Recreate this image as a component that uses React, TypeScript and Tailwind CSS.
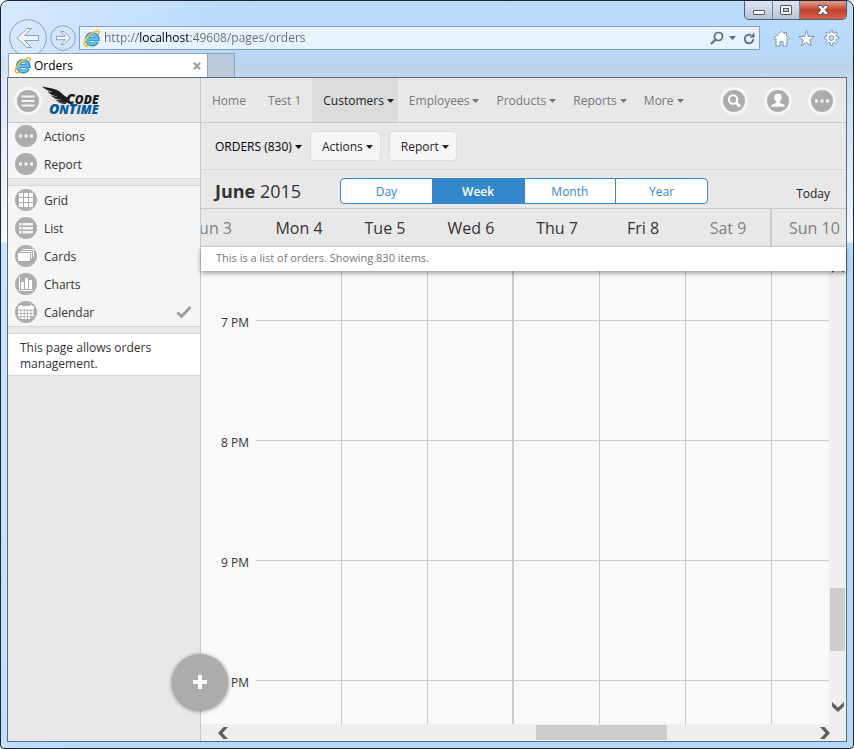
import type { ReactNode } from "react";
import clsx from "clsx";

type IconProps = { className?: string };

const mainMenu = [
  { label: "Home", menu: false },
  { label: "Test 1", menu: false },
  { label: "Customers", menu: true, active: true },
  { label: "Employees", menu: true },
  { label: "Products", menu: true },
  { label: "Reports", menu: true },
  { label: "More", menu: true },
];

const views = ["Day", "Week", "Month", "Year"];

const days = [
  { label: "Mon 4" },
  { label: "Tue 5" },
  { label: "Wed 6", divider: true },
  { label: "Thu 7" },
  { label: "Fri 8" },
  { label: "Sat 9", weekend: true },
];

const hours = ["7 PM", "8 PM", "9 PM", "10 PM"];

function Caret({ className }: IconProps) {
  return (
    <svg viewBox="0 0 7 4" className={clsx("h-1 w-[7px] shrink-0 fill-current", className)}>
      <path d="M0 0h7L3.5 4z" />
    </svg>
  );
}

function IeIcon() {
  return (
    <svg viewBox="0 0 17 17" className="size-[17px] shrink-0">
      <path d="M14 11.500a5.300 5.300 0 1 1 .5-2.500H4.500" fill="none" stroke="#2a86c8" strokeWidth="4" />
      <path d="M13.600 11.300a5 5 0 1 1 .5-2.300H4.800" fill="none" stroke="#62c3f2" strokeWidth="2.400" />
      <path
        d="M1.900 15.500C-.3 13.300 3 8 7.600 4.200 11.500 1 15.300.2 16 1.700c.3.900 0 2-.7 3.200"
        fill="none"
        stroke="#f6bd22"
        strokeWidth="1.600"
      />
      <path d="M1.900 15.500c1 .8 3.200.2 5-1" fill="none" stroke="#e9a90f" strokeWidth="1.400" />
    </svg>
  );
}

function Logo() {
  return (
    <svg viewBox="0 0 64 34" className="h-[34px] w-16 shrink-0" role="img" aria-label="Code OnTime">
      <path
        fill="#1d1d1f"
        d="M0 2.500c5 1 11.500 1.800 15.500 3.800 3.500 1.700 5 4.200 8 6.200l4.500 2-2.800 4c-4.200.8-8.700-.4-12.200-3 2.500.8 4.800 1 6.500.4-4.500-.3-8.500-2.300-11-5 2.500 1.200 5 1.900 7 1.700C10.500 11.500 7.500 9.500 5.500 7.200c2 .8 3.700 1.200 5.500 1.100C7 7.200 3 5.500 0 2.500z"
      />
      <path fill="#1d1d1f" d="M15 17c3 1.500 6.500 2 10 1.600l-1.500 1.500c-3.500-.2-6.500-1.100-8.500-3.100z" />
      <g fontFamily="'Open Sans', sans-serif" fontWeight="800" fontStyle="italic">
        <text x="24" y="19.500" fontSize="14" fill="#1d1d1f">
          C<tspan fontSize="12">ODE</tspan>
        </text>
        <text x="7" y="29.500" fontSize="14" fill="#00599f">
          O<tspan fontSize="12">N</tspan>T<tspan fontSize="12">IME</tspan>
        </text>
      </g>
    </svg>
  );
}

function DotsGlyph() {
  return <path fill="#f5f5f5" d="M4 9.500h3v3H4zM9.500 9.500h3v3h-3zM15 9.500h3v3h-3z" />;
}

function GridGlyph() {
  return (
    <path
      fill="#fff"
      d="M4 4h4v4H4zM9 4h4v4H9zM14 4h4v4h-4zM4 9h4v4H4zM9 9h4v4H9zM14 9h4v4h-4zM4 14h4v4H4zM9 14h4v4H9zM14 14h4v4h-4z"
    />
  );
}

function ListGlyph() {
  return (
    <path
      fill="#f5f5f5"
      d="M4 6h2.500v2.500H4zM7.500 6H18v2.500H7.500zM4 10h2.500v2.500H4zM7.500 10H18v2.500H7.500zM4 14h2.500v2.500H4zM7.500 14H18v2.500H7.500z"
    />
  );
}

function CardsGlyph() {
  return (
    <>
      <path d="M7.500 4.500h11v7M5.500 6.500h11v7" fill="none" stroke="#fff" />
      <path fill="#fff" d="M3 8h12v8H3z" />
    </>
  );
}

function ChartsGlyph() {
  return (
    <>
      <path d="M4.500 4v13.500H18" fill="none" stroke="#fff" />
      <path fill="#fff" d="M6 9h3v7H6zM10 5h3v11h-3zM14 7h3v9h-3z" />
    </>
  );
}

function CalendarGlyph() {
  return (
    <>
      <path fill="#fff" d="M3 5h16v3.500H3zM5 4h2v1H5zM15 4h2v1h-2z" />
      <path
        fill="#fff"
        d="M3 9.500h2.500V12H3zM6.300 9.500h2.500V12H6.300zM9.600 9.500h2.500V12H9.600zM12.900 9.500h2.500V12h-2.500zM16.200 9.500h2.500V12h-2.500zM3 12.700h2.500v2.500H3zM6.300 12.700h2.500v2.500H6.300zM9.600 12.700h2.500v2.500H9.600zM12.900 12.700h2.500v2.500h-2.500zM16.200 12.700h2.500v2.500h-2.500zM4.500 15.900h1V18h-1zM6.300 15.900h2.500V18H6.300zM9.600 15.900h2.500V18H9.600zM12.900 15.900h2.500V18h-2.500z"
      />
    </>
  );
}

function Disc({ children }: { children: ReactNode }) {
  return (
    <svg viewBox="0 0 22 22" className="size-[22px] shrink-0">
      <circle cx="11" cy="11" r="11" fill="#acacac" />
      {children}
    </svg>
  );
}

function RoundButton({ label, children }: { label: string; children: ReactNode }) {
  return (
    <button
      aria-label={label}
      className="flex size-7 shrink-0 items-center justify-center rounded-full bg-[#f6f6f6]"
    >
      <Disc>{children}</Disc>
    </button>
  );
}

function SideItem({ label, icon, checked }: { label: string; icon: ReactNode; checked?: boolean }) {
  return (
    <button className="flex h-6 w-full items-center gap-[7px] pr-2 pl-[7px] text-left">
      <Disc>{icon}</Disc>
      <span className="flex-1 pt-0.5">{label}</span>
      {checked && (
        <svg viewBox="0 0 16 12" className="h-3 w-4">
          <path d="M1.500 6.500l4 4L14.500 1" fill="none" stroke="#999" strokeWidth="2.600" />
        </svg>
      )}
    </button>
  );
}

function BrowserChrome() {
  return (
    <header>
      <div className="flex h-[19px] justify-end">
        <div className="flex overflow-hidden rounded-b-[5px] border border-t-0 border-[#4d5f73] bg-linear-to-b from-[#dbe5f0] via-[#cbd7e4] to-[#b4c5d8]">
          <button aria-label="Minimize" className="flex w-7 items-center justify-center border-r border-[#6f8095]">
            <svg viewBox="0 0 12 5" className="mt-1 h-[5px] w-3">
              <rect x=".5" y=".5" width="11" height="4" rx=".5" fill="#fff" stroke="#535666" />
            </svg>
          </button>
          <button aria-label="Maximize" className="flex w-[27px] items-center justify-center border-r border-[#6f8095]">
            <svg viewBox="0 0 12 10" className="h-[10px] w-3">
              <rect x=".5" y=".5" width="11" height="9" rx=".5" fill="#fff" stroke="#535666" />
              <rect x="3.500" y="3.500" width="5" height="3" fill="#b9c8d9" stroke="#535666" />
            </svg>
          </button>
          <button
            aria-label="Close"
            className="flex w-[46px] items-center justify-center bg-linear-to-b from-[#e0a090] via-[#c0402a] to-[#d5604a]"
          >
            <svg viewBox="0 0 12 10" className="h-[10px] w-3">
              <path d="M1 .5h3.200L6 2.700 7.800.500H11v1.200L8.200 5 11 8.300v1.200H7.800L6 7.300 4.200 9.500H1V8.300L3.800 5 1 1.700z" fill="#fff" stroke="#535666" />
            </svg>
          </button>
        </div>
      </div>

      <div className="flex h-[33px] items-center pt-[3px] pr-[7px] pl-[2px]">
        <button aria-label="Back" className="shrink-0">
          <svg viewBox="0 0 38 38" className="size-[38px]">
            <circle cx="19" cy="19" r="18.300" fill="#d5e7fa" fillOpacity=".6" stroke="#8aa1bb" />
            <path
              d="M8 19l10-9.500h4.500L15.500 16.500H29.500v5H15.500l7 7H18z"
              fill="#f3f8fe"
              stroke="#8aa1bb"
              strokeLinejoin="round"
            />
          </svg>
        </button>
        <button aria-label="Forward" className="ml-[3px] shrink-0">
          <svg viewBox="0 0 26 26" className="size-[26px]">
            <circle cx="13" cy="13" r="12.300" fill="#d5e7fa" fillOpacity=".6" stroke="#8aa1bb" />
            <path
              d="M20.500 13l-6.500 6.500h-3l4.500-4.800H6.500v-3.400h9L11 6.500h3z"
              fill="#f3f8fe"
              stroke="#8aa1bb"
              strokeLinejoin="round"
            />
          </svg>
        </button>
        <div className="ml-[3px] flex h-6 flex-1 items-center border border-[#8ba0b8] bg-[#e6f2fe] pr-1 pl-[3px] text-[#5f6a76]">
          <IeIcon />
          <input
            aria-label="Address"
            defaultValue="http://localhost:49608/pages/orders"
            className="ml-1 min-w-0 flex-1 bg-[linear-gradient(90deg,#6b6b6b_34px,#000_34px,#000_84px,#6b6b6b_84px)] bg-clip-text text-xs text-transparent outline-none"
          />
          <button aria-label="Search">
            <svg viewBox="0 0 14 14" className="size-[14px]">
              <circle cx="8.500" cy="5.500" r="4" fill="none" stroke="currentColor" strokeWidth="1.700" />
              <path d="M5.500 8.500L1 13" stroke="currentColor" strokeWidth="2.200" />
            </svg>
          </button>
          <button aria-label="Search options" className="ml-[5px]">
            <Caret />
          </button>
          <button aria-label="Refresh" className="ml-[7px]">
            <svg viewBox="0 0 12 13" className="h-[13px] w-3">
              <path d="M8 3.200A4.300 4.300 0 1 0 10.300 7" fill="none" stroke="currentColor" strokeWidth="1.800" />
              <path d="M6.500 5.500h5V.5z" fill="currentColor" />
            </svg>
          </button>
        </div>
        <div className="ml-[13px] flex gap-2">
          <button aria-label="Home page">
            <svg viewBox="0 0 17 17" className="size-[17px]" fill="#fff" stroke="#7f93a9" strokeLinejoin="round">
              <path d="M8.500 1L.8 8.500l1.200 1.200 1-1V16h4v-4.500h3V16h4V8.700l1 1 1.200-1.200L13.500 5.800V2.500h-2v1.300z" />
            </svg>
          </button>
          <button aria-label="Favorites">
            <svg viewBox="0 0 17 17" className="size-[17px]" fill="#fff" stroke="#7f93a9" strokeLinejoin="round">
              <path d="M8.500.8l2 5.500 5.900.2-4.600 3.600 1.600 5.700-4.900-3.300-4.900 3.300 1.600-5.700L.6 6.500l5.900-.2z" />
            </svg>
          </button>
          <button aria-label="Tools">
            <svg viewBox="0 0 17 17" className="size-[17px]" fill="#fff" stroke="#7f93a9" strokeLinejoin="round">
              <path d="M7.300 2.800L7.500.7h2l.2 2.100 1.500.6 1.700-1.400 1.400 1.400-1.400 1.700.6 1.500 2.300.2v2l-2.300.3-.6 1.500 1.400 1.700-1.400 1.400-1.700-1.300-1.500.6-.2 2.300h-2l-.2-2.300-1.500-.6-1.700 1.300-1.400-1.400 1.400-1.700-.6-1.500-2.200-.3v-2l2.200-.2.6-1.500-1.400-1.700L4.100 2l1.700 1.400z" />
              <circle cx="8.500" cy="8" r="2.400" fill="#c5dffa" />
            </svg>
          </button>
        </div>
      </div>

      <div className="relative flex h-6 pl-px text-xs">
        <div className="flex w-[200px] items-center border border-b-0 border-[#8fa3ba] bg-white pr-[6px] pl-[5px]">
          <IeIcon />
          <span className="ml-[3px] flex-1 text-black">Orders</span>
          <button aria-label="Close tab">
            <svg viewBox="0 0 8 8" className="size-2">
              <path d="M.8.8l6.400 6.400M7.200.8L.8 7.200" stroke="#9b9b9b" strokeWidth="2" />
            </svg>
          </button>
        </div>
        <button aria-label="New tab" className="w-[27px] border border-b-0 border-l-0 border-[#8fa3ba] bg-[#bccbdc]" />
      </div>
    </header>
  );
}

function Sidebar() {
  return (
    <aside className="flex w-[193px] shrink-0 flex-col border-r border-[#cacaca] text-xs text-[#333]">
      <div className="flex h-[45px] items-center border-b border-[#cacaca] pt-[2px] pl-[6px]">
        <RoundButton label="Menu">
          <path fill="#f5f5f5" d="M4.500 5.500h13v2h-13zM4.500 10h13v2h-13zM4.500 14.500h13v2h-13z" />
        </RoundButton>
        <a href="#home">
          <Logo />
        </a>
      </div>
      <nav className="flex flex-col gap-1 border-b border-[#d9d9d9] bg-[#f5f5f5] pt-px pb-[2px]">
        <SideItem label="Actions" icon={<DotsGlyph />} />
        <SideItem label="Report" icon={<DotsGlyph />} />
      </nav>
      <nav className="mt-[6px] flex flex-col gap-1 border-y border-[#d9d9d9] bg-[#f5f5f5] py-[2px]">
        <SideItem label="Grid" icon={<GridGlyph />} />
        <SideItem label="List" icon={<ListGlyph />} />
        <SideItem label="Cards" icon={<CardsGlyph />} />
        <SideItem label="Charts" icon={<ChartsGlyph />} />
        <SideItem label="Calendar" icon={<CalendarGlyph />} checked />
      </nav>
      <p className="mt-[6px] border-y border-[#d9d9d9] bg-white px-3 pt-[6px] pb-[3px] leading-4">
        This page allows orders management.
      </p>
    </aside>
  );
}

function TopNav() {
  return (
    <div className="flex h-[45px] items-center border-b border-[#cacaca] pr-[10px] text-xs">
      <nav className="flex h-full">
        {mainMenu.map((item) => (
          <button
            key={item.label}
            className={clsx(
              "flex items-center gap-[3px] pt-0.5 pl-[11px]",
              !item.menu && "pr-[11px]",
              item.menu && (item.active ? "pr-1" : "pr-[6px]"),
              item.active ? "bg-[#dcdcdc] text-[#222]" : "text-[#777]",
            )}
          >
            {item.label}
            {item.menu && <Caret />}
          </button>
        ))}
      </nav>
      <div className="ml-auto flex gap-4 pt-0.5">
        <RoundButton label="Search">
          <circle cx="10" cy="9.500" r="4.200" fill="none" stroke="#fff" strokeWidth="2" />
          <path d="M13 12.500l4 4" stroke="#fff" strokeWidth="2.800" />
        </RoundButton>
        <RoundButton label="Account">
          <path
            fill="#fff"
            d="M11 3.500c2.300 0 3.600 1.600 3.600 3.800 0 1.800-.8 3.300-1.900 4.200v1.300l3.800 1.600c.9.400 1.200 1 1.200 2.400H4.300c0-1.400.3-2 1.200-2.400l3.800-1.600v-1.300c-1.100-.9-1.900-2.400-1.900-4.200 0-2.200 1.300-3.800 3.600-3.800z"
          />
        </RoundButton>
        <RoundButton label="More options">
          <DotsGlyph />
        </RoundButton>
      </div>
    </div>
  );
}

function Toolbar() {
  const action =
    "flex h-[30px] items-center gap-[3px] rounded-[4px] border border-[#dddddd] bg-[#f6f6f6] pt-0.5 pr-[7px] pl-[11px] text-[#222]";
  return (
    <div className="flex h-[47px] items-center border-b border-[#d9d9d9] pl-[14px] text-xs">
      <button className="flex items-center gap-[3px] pt-0.5 text-black">
        ORDERS (830)
        <Caret />
      </button>
      <div className="ml-2 flex gap-2">
        <button className={action}>
          Actions
          <Caret />
        </button>
        <button className={action}>
          Report
          <Caret />
        </button>
      </div>
    </div>
  );
}

function CalendarHeader() {
  return (
    <div className="flex h-[39px] items-center border-b border-[#cacaca] pt-[3px] pr-4 pl-[14px] text-xs">
      <h1 className="w-[125px] text-lg text-[#333]">
        <strong className="font-bold">June</strong> 2015
      </h1>
      <div className="flex h-[26px] w-[368px] overflow-hidden rounded-[4px] border border-[#3388cc] bg-white">
        {views.map((view) => (
          <button
            key={view}
            aria-pressed={view === "Week"}
            className={clsx(
              "flex-1 border-l border-[#3388cc] pt-0.5 first:border-l-0",
              view === "Week" ? "bg-[#3388cc] font-semibold text-white" : "text-[#3388cc]",
            )}
          >
            {view}
          </button>
        ))}
      </div>
      <button className="ml-auto pt-[6px] text-[#222]">Today</button>
    </div>
  );
}

function DayHeader() {
  return (
    <div className="flex h-[38px] overflow-hidden border-b border-[#d9d9d9] text-base whitespace-nowrap text-[#333]">
      <div className="flex w-[55px] items-center justify-end overflow-hidden pr-6 text-[#808080]">Sun 3</div>
      {days.map((day) => (
        <div
          key={day.label}
          className={clsx(
            "flex w-[86px] shrink-0 items-center justify-center",
            day.weekend && "border-r-2 border-[#cacaca] text-[#808080]",
          )}
        >
          {day.label}
        </div>
      ))}
      <div className="flex flex-1 items-center pl-[17px] text-[#808080]">Sun 10</div>
    </div>
  );
}

function DayColumn({ className }: { className: string }) {
  return (
    <div className={clsx("flex flex-col border-[#cacaca]", className)}>
      <div className="h-[50px] border-b border-[#cacaca]" />
      <div className="h-[120px] border-b border-[#cacaca]" />
      <div className="h-[120px] border-b border-[#cacaca]" />
      <div className="h-[120px] border-b border-[#cacaca]" />
      <div className="min-h-[43px] flex-1" />
    </div>
  );
}

function CalendarGrid() {
  return (
    <div className="flex flex-1 bg-[#f9f9f9]">
      <div className="flex w-[55px] shrink-0 flex-col pt-11 pr-[7px] text-right text-xs text-[#333]">
        {hours.map((hour) => (
          <div key={hour} className="h-[120px] leading-4 last:h-4">
            {hour}
          </div>
        ))}
      </div>
      {days.map((day) => (
        <DayColumn key={day.label} className={clsx("w-[86px] shrink-0", day.divider ? "border-r-2" : "border-r")} />
      ))}
      <DayColumn className="flex-1" />
      <div className="flex w-[17px] shrink-0 flex-col items-center bg-[#efefef] pb-3">
        {/* up arrow, mostly hidden behind the description bar */}
        <svg viewBox="0 0 12 2" className="h-[2px] w-3 fill-[#606060]">
          <path d="M0 0h2.500L0 2zM12 0H9.500L12 2z" />
        </svg>
        <div className="flex-[315]" />
        <div className="w-[15px] flex-[63] bg-[#cdcdcd]" />
        <div className="flex-[51]" />
        <svg viewBox="0 0 12 10" className="h-[10px] w-3 fill-[#606060]">
          <path d="M0 0v4.500L6 10l6-5.500V0L6 5.500z" />
        </svg>
      </div>
    </div>
  );
}

function HorizontalScroll() {
  return (
    <div className="flex h-[17px] items-center bg-[#efefef] pr-4 pl-[17px]">
      <svg viewBox="0 0 10 12" className="h-3 w-[10px] fill-[#606060]">
        <path d="M10 0H5.500L0 6l5.500 6H10L4.500 6z" />
      </svg>
      <div className="flex-[308]" />
      <div className="h-[15px] flex-[131] bg-[#cdcdcd]" />
      <div className="flex-[153]" />
      <svg viewBox="0 0 10 12" className="h-3 w-[10px] fill-[#606060]">
        <path d="M0 0h4.500L10 6l-5.500 6H0l5.500-6z" />
      </svg>
    </div>
  );
}

export default function App() {
  return (
    <div className="flex min-h-screen flex-col rounded-t-[8px] rounded-b-[4px] border border-[#20262e] bg-[#b5d9fd] bg-[linear-gradient(100deg,rgba(255,255,255,0.4)_0px,rgba(255,255,255,0)_220px),linear-gradient(180deg,#bbdcfd_0px,#b9d9fb_50px,#bad2ea_66px,#c3dcf5_80px,#edf5fd_225px,#f2f8fe_241px,#b5d9fd_242px)] px-[6px] pb-[6px] font-['Open_Sans','Noto_Sans',sans-serif]">
      <BrowserChrome />
      <div className="relative flex flex-1 border border-[#5c6b7c] bg-[#e8e8e8]">
        <Sidebar />
        <main className="flex min-w-0 flex-1 flex-col">
          <TopNav />
          <Toolbar />
          <CalendarHeader />
          <DayHeader />
          <p className="relative flex h-6 items-center bg-white pb-0.5 pl-[15px] text-[11px] text-[#777] shadow-[0_2px_5px_rgba(0,0,0,0.4)]">
            This is a list of orders. Showing 830 items.
          </p>
          <CalendarGrid />
          <HorizontalScroll />
        </main>
        <button
          aria-label="New order"
          className="absolute bottom-[31px] left-[164px] flex size-14 items-center justify-center rounded-full bg-[#acacac] shadow-[0_1px_4px_rgba(0,0,0,0.5)]"
        >
          <svg viewBox="0 0 14 14" className="size-[14px] fill-white">
            <path d="M5 0h4v5h5v4H9v5H5V9H0V5h5z" />
          </svg>
        </button>
      </div>
    </div>
  );
}
